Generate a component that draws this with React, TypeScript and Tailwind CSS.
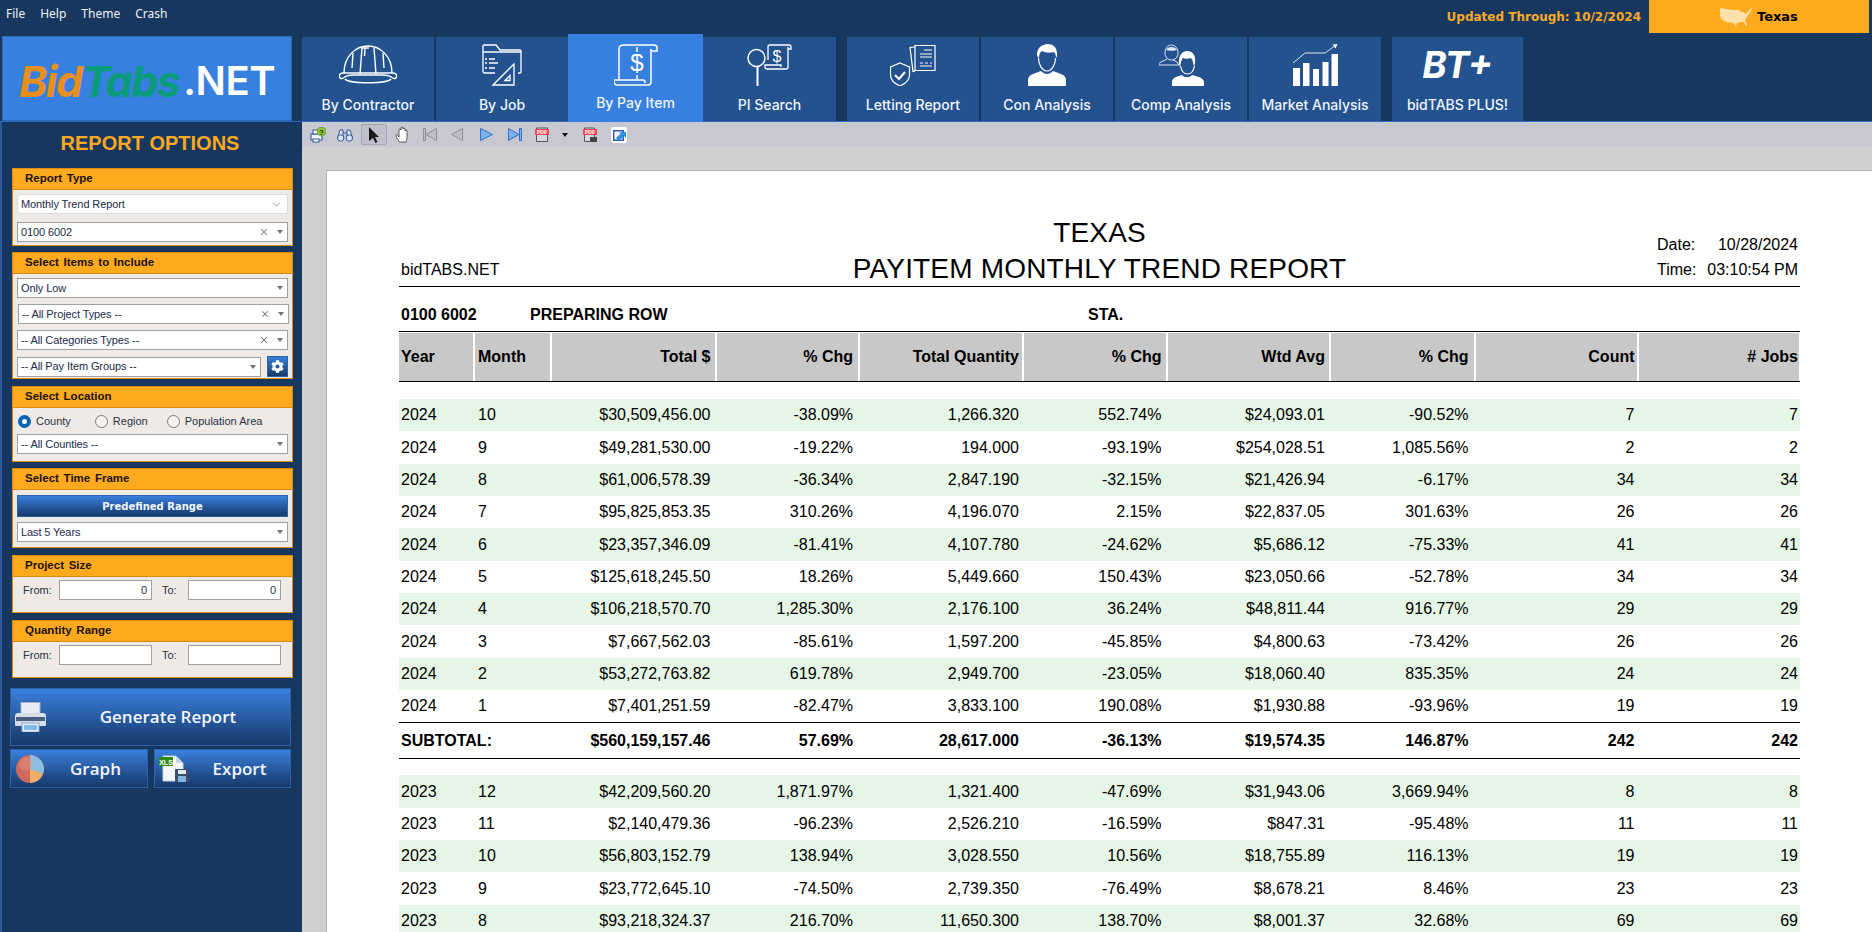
import type { ReactNode } from 'react'
import { ChevronDown, X } from 'lucide-react'
import { FaCog } from 'react-icons/fa'

type Row = string[]

const group2024: Row[] = [
  ['2024', '10', '$30,509,456.00', '-38.09%', '1,266.320', '552.74%', '$24,093.01', '-90.52%', '7', '7'],
  ['2024', '9', '$49,281,530.00', '-19.22%', '194.000', '-93.19%', '$254,028.51', '1,085.56%', '2', '2'],
  ['2024', '8', '$61,006,578.39', '-36.34%', '2,847.190', '-32.15%', '$21,426.94', '-6.17%', '34', '34'],
  ['2024', '7', '$95,825,853.35', '310.26%', '4,196.070', '2.15%', '$22,837.05', '301.63%', '26', '26'],
  ['2024', '6', '$23,357,346.09', '-81.41%', '4,107.780', '-24.62%', '$5,686.12', '-75.33%', '41', '41'],
  ['2024', '5', '$125,618,245.50', '18.26%', '5,449.660', '150.43%', '$23,050.66', '-52.78%', '34', '34'],
  ['2024', '4', '$106,218,570.70', '1,285.30%', '2,176.100', '36.24%', '$48,811.44', '916.77%', '29', '29'],
  ['2024', '3', '$7,667,562.03', '-85.61%', '1,597.200', '-45.85%', '$4,800.63', '-73.42%', '26', '26'],
  ['2024', '2', '$53,272,763.82', '619.78%', '2,949.700', '-23.05%', '$18,060.40', '835.35%', '24', '24'],
  ['2024', '1', '$7,401,251.59', '-82.47%', '3,833.100', '190.08%', '$1,930.88', '-93.96%', '19', '19'],
]

const group2023: Row[] = [
  ['2023', '12', '$42,209,560.20', '1,871.97%', '1,321.400', '-47.69%', '$31,943.06', '3,669.94%', '8', '8'],
  ['2023', '11', '$2,140,479.36', '-96.23%', '2,526.210', '-16.59%', '$847.31', '-95.48%', '11', '11'],
  ['2023', '10', '$56,803,152.79', '138.94%', '3,028.550', '10.56%', '$18,755.89', '116.13%', '19', '19'],
  ['2023', '9', '$23,772,645.10', '-74.50%', '2,739.350', '-76.49%', '$8,678.21', '8.46%', '23', '23'],
  ['2023', '8', '$93,218,324.37', '216.70%', '11,650.300', '138.70%', '$8,001.37', '32.68%', '69', '69'],
]

const headers = ['Year', 'Month', 'Total $', '% Chg', 'Total Quantity', '% Chg', 'Wtd Avg', '% Chg', 'Count', '# Jobs']

const cellPad = [
  'pl-[2px] text-left',
  'pl-[3px] text-left',
  'pr-[6.5px] text-right',
  'pr-[7px] text-right',
  'pr-[5px] text-right',
  'pr-[6.5px] text-right',
  'pr-[6px] text-right',
  'pr-[7.5px] text-right',
  'pr-[4.5px] text-right',
  'pr-[3px] text-right',
]

const gridCols = 'grid grid-cols-[76px_77px_165px_143px_164px_144px_163px_145px_163px_162px]'

function HelmetIcon() {
  return (
    <svg width="58" height="41" viewBox="0 0 58 41" fill="none" stroke="white" strokeWidth="1.4">
      <path d="M5 29C5 12 17 2 29 2s24 10 24 27" />
      <path d="M4 29c-3 0-4 2-3.500 4 .6 2 2.500 2 4.500 .5C8 31 12 31 15 31h28c3 0 7 0 10 2.500 2 1.500 3.900 1.500 4.500-.5.5-2-.5-4-3.500-4z" />
      <path d="M6 35c4 5 42 5 46 0" />
      <path d="M21 30l2-26M37 30l-2-26M26 4l-.5 8M23 4h7" />
      <path d="M14 9l-1 15M44 9l1 15" />
    </svg>
  )
}

function FolderIcon() {
  return (
    <svg width="40" height="42" viewBox="0 0 40 42" fill="none" stroke="white" strokeWidth="1.3">
      <path d="M13 29H3q-2 0-2-2V2q0-1 1-1h12l4 5h20q1 0 1 1v21q0 1-1 1h-2" />
      <path d="M1 8h38" />
      <path d="M3 15h2M7 15h6M3 19h2M7 19h9M3 24h2M7 24h6" />
      <path d="M11 41l21-21v21z" />
      <path d="M23 36.500l5-5v5z" />
    </svg>
  )
}

function ScrollIcon() {
  return (
    <svg width="44" height="42" viewBox="0 0 44 42" fill="none" stroke="white" strokeWidth="1.5">
      <path d="M5 35V5q0-4 5-4h30q3 0 3 3v3h-6" />
      <path d="M37 5v33q0 3-3 3H3q-3 0-3-3v-2h29q2 0 2 2v1" />
      <path d="M23 3v5M23 31v4" />
      <text x="23" y="27" textAnchor="middle" fontSize="24" fill="white" stroke="none" fontFamily="Liberation Sans, sans-serif">$</text>
    </svg>
  )
}

function SearchScrollIcon() {
  return (
    <svg width="45" height="42" viewBox="0 0 45 42" fill="none" stroke="white" strokeWidth="1.3">
      <circle cx="9.500" cy="14" r="8.500" strokeWidth="1.5" />
      <path d="M10.500 23v19" strokeWidth="2" />
      <path d="M21 16V3q0-2 2-2h19q2 0 2 2v2h-3" />
      <path d="M41 3v20q0 2-2 2H20q-2 0-2-2v-2h16v2" />
      <text x="30" y="18" textAnchor="middle" fontSize="16" fill="white" stroke="none" fontFamily="Liberation Sans, sans-serif">$</text>
    </svg>
  )
}

function LettingIcon() {
  return (
    <svg width="46" height="42" viewBox="0 0 46 42" fill="none" stroke="white" strokeWidth="1.200">
      <path d="M25 3l-5 .5 3 24 2-.3" />
      <path d="M25 1.500h20v25H25z" />
      <path d="M34 6h8M30 10h12M30 13h12M30 19h3M35 19h3M40 19h2M30 22h12" strokeWidth="1" />
      <path d="M10 19l9.500 4v8c0 5-5 9-9.500 11C5.500 40 .5 36 .5 31v-8z" />
      <path d="M5 31l4 4 6-7" strokeWidth="2" />
    </svg>
  )
}

function PersonIcon() {
  return (
    <svg width="38" height="42" viewBox="0 0 38 42" fill="white">
      <path d="M9 11C9 4 13 1 19 0c6 0 10 3 10 10 0 2 0 3-1 4 0-3-1-5-2-6-3 1-9 1-12-1-2 1-3 4-3 7-1-1-2-2-2-3z" />
      <path d="M10.500 14c0 7 4 13 8.500 13s8.500-6 8.500-13" fill="none" stroke="white" strokeWidth="1.200" />
      <path d="M0 42v-6c0-3 2-5 5-6l8-3c2 2 4 3 6 3s4-1 6-3l8 3c3 1 5 3 5 6v6z" />
    </svg>
  )
}

function CompIcon() {
  return (
    <svg width="45" height="42" viewBox="0 0 45 42" fill="none">
      <path d="M6 9c0-5 3-8 6.500-8S19 4 19 9c0 4-3 7-6.500 7S6 13 6 9z" stroke="#dbe6f3" strokeWidth="1" />
      <path d="M7 6c2-4 9-4 11 0-3 1-8 1-11 0z" fill="#dbe6f3" />
      <path d="M8 15l-7 3.500c-1 .5-1 1-1 2V21h20l-2-3-4-2" stroke="#dbe6f3" strokeWidth="1" />
      <path d="M20 20c-1-6 2-13 8-13 7 0 9 6 8 12 0 1-1 3-1 4-1-4-1-7-3-9-3 1-6 1-8 0-2 2-2 5-3 9l-1-3z" fill="white" />
      <path d="M21.500 22c1 5 4 8 7 8s6-3 7-8" stroke="white" strokeWidth="1.200" />
      <path d="M13 42v-4c0-2 1-4 4-5l6-2c2 2 3 2 5 2s3 0 5-2l7 2c3 1 5 3 5 5v4z" fill="white" />
    </svg>
  )
}

function MarketIcon() {
  return (
    <svg width="45" height="42" viewBox="0 0 45 42" fill="white">
      <rect x="0" y="24" width="7" height="18" />
      <rect x="10" y="19" width="6.500" height="23" />
      <rect x="20" y="25" width="6" height="17" />
      <rect x="29.500" y="18" width="6" height="24" />
      <rect x="38.500" y="10" width="6.500" height="32" />
      <path d="M0 19L12 9h20L43 1" fill="none" stroke="#dbe6f3" strokeWidth="1" />
      <path d="M44.500 0l-5 .500 3 4z" />
    </svg>
  )
}

const tabs: { label: string; icon: ReactNode; className: string; active?: boolean }[] = [
  { label: 'By Contractor', icon: <HelmetIcon />, className: 'w-[132px]' },
  { label: 'By Job', icon: <FolderIcon />, className: 'ml-[2px] w-[132px]' },
  { label: 'By Pay Item', icon: <ScrollIcon />, className: 'w-[135px]', active: true },
  { label: 'PI Search', icon: <SearchScrollIcon />, className: 'w-[133px]' },
  { label: 'Letting Report', icon: <LettingIcon />, className: 'ml-[11px] w-[132px]' },
  { label: 'Con Analysis', icon: <PersonIcon />, className: 'ml-[2px] w-[132px]' },
  { label: 'Comp Analysis', icon: <CompIcon />, className: 'ml-[2px] w-[132px]' },
  { label: 'Market Analysis', icon: <MarketIcon />, className: 'ml-[2px] w-[132px]' },
  {
    label: 'bidTABS PLUS!',
    className: 'ml-[11px] w-[131px]',
    icon: <span className="font-['Inter',sans-serif] text-[37px] font-bold italic leading-[42px] text-white">BT+</span>,
  },
]

function NavTab({ label, icon, className, active }: { label: string; icon: ReactNode; className: string; active?: boolean }) {
  return (
    <div
      className={`flex flex-col items-center ${className} ${
        active ? 'relative z-10 -mt-[3px] h-[88px] bg-[#3880e0] pt-[9px]' : 'h-[84px] bg-[#23528f] pt-[6px]'
      }`}
    >
      <div className="flex h-[43px] items-center">{icon}</div>
      <div className={`font-['Inter',sans-serif] text-[14px] font-medium leading-[18px] text-[#f0f4fa] ${active ? 'mt-[8px]' : 'mt-[10px]'}`}>{label}</div>
    </div>
  )
}

function Caret() {
  return <span className="h-0 w-0 border-x-[3.500px] border-t-[4px] border-x-transparent border-t-[#707070]" />
}

function Select({ value, clear, soft, className }: { value: string; clear?: boolean; soft?: boolean; className?: string }) {
  return (
    <div
      className={`flex h-[20px] items-center border bg-white pl-[3px] pr-[4px] tracking-[-0.100px] text-[#1d2a4a] ${
        soft ? 'rounded-[2px] border-[#dcdcdc]' : 'border-[#a0a0a0]'
      } ${className ?? ''}`}
    >
      <span className="flex-1 truncate">{value}</span>
      {clear && <X className="mr-[8px] text-[#68707c]" size={10} strokeWidth={2.500} />}
      {soft ? <ChevronDown className="text-[#505050]" size={13} strokeWidth={1} /> : <Caret />}
    </div>
  )
}

function Panel({ title, children, className }: { title: string; children: ReactNode; className?: string }) {
  return (
    <section className={`w-[281px] border border-[#dc8b10] bg-[#efeae5] ${className ?? ''}`}>
      <h2 className="flex h-[21px] items-center border-b border-[#dc8b10] bg-[#fdaa1e] pl-[12px] text-[11.500px] font-bold text-[#1a1208] [word-spacing:1.500px]">
        {title}
      </h2>
      {children}
    </section>
  )
}

function Radio({ label, checked }: { label: string; checked?: boolean }) {
  return (
    <label className="flex items-center gap-[5px]">
      <span
        className={`h-[13px] w-[13px] rounded-full ${
          checked ? 'border-[4px] border-[#0563b5] bg-white' : 'border border-[#7a7a7a] bg-[#f6f3ef]'
        }`}
      />
      <span className="text-[#2a3245]">{label}</span>
    </label>
  )
}

function RangeRow({ from, to }: { from?: string; to?: string }) {
  return (
    <div className="flex h-[35px] items-start pl-[10px] pt-[3px] text-[#2a3245]">
      <span className="flex h-[20px] w-[36px] items-center">From:</span>
      <div className="flex h-[20px] w-[93px] items-center justify-end border border-[#a0a0a0] bg-white pr-[4px]">{from}</div>
      <span className="ml-[10px] flex h-[20px] w-[26px] items-center">To:</span>
      <div className="flex h-[20px] w-[93px] items-center justify-end border border-[#a0a0a0] bg-white pr-[4px]">{to}</div>
    </div>
  )
}

function ActionButton({ label, icon, className }: { label: string; icon: ReactNode; className: string }) {
  return (
    <button className={`flex items-center border border-[#2c62a8] bg-gradient-to-b from-[#3a80de] to-[#17396b] font-['Open_Sans',sans-serif] text-[17px] font-semibold text-[#f2f6fc] ${className}`}>
      {icon}
      <span className="flex-1 text-center">{label}</span>
    </button>
  )
}

function PrinterIcon() {
  return (
    <svg className="ml-[4px]" width="31" height="30" viewBox="0 0 31 30">
      <rect x="6" y="0.500" width="19" height="12" fill="#e8ecf4" stroke="#a8b4c8" />
      <path d="M3 11h25q3 0 3 3v9q0 1-1 1H1q-1 0-1-1v-9q0-3 3-3z" fill="#d6deea" />
      <rect x="1" y="15" width="29" height="4" fill="#4a5e80" />
      <rect x="7" y="21" width="17" height="9" fill="#e8f2fb" stroke="#8fa5c0" />
      <rect x="9" y="23" width="13" height="5" fill="#7fbde8" />
    </svg>
  )
}

function PieIcon() {
  return (
    <svg className="ml-[5px]" width="28" height="28" viewBox="0 0 28 28">
      <circle cx="14" cy="14" r="14" fill="#cf6a5c" />
      <path d="M14 14L14 0A14 14 0 0 1 27 19z" fill="#89c0e4" />
      <path d="M14 14L27 19A14 14 0 0 1 14 28z" fill="#efae6a" />
      <circle cx="10" cy="9" r="7" fill="#e89a8c" opacity="0.400" />
    </svg>
  )
}

function XlsIcon() {
  return (
    <svg className="ml-[4px]" width="30" height="27" viewBox="0 0 30 27">
      <path d="M4 1h13l7 7v18H4z" fill="#f4f7fb" stroke="#c8d0dc" />
      <path d="M17 1v7h7z" fill="#c8d4e2" />
      <rect x="0" y="2" width="14" height="9" fill="#2f8a12" />
      <text x="7" y="9.500" textAnchor="middle" fontSize="7" fontWeight="700" fill="white" fontFamily="Liberation Sans, sans-serif">XLS</text>
      <rect x="16" y="14" width="14" height="13" rx="1" fill="#3d4f6c" />
      <rect x="19" y="15" width="8" height="4" fill="#dfe6ee" />
      <rect x="19" y="21" width="8" height="6" fill="#7fb6e0" />
    </svg>
  )
}

function UsMap() {
  return (
    <svg width="33" height="20" viewBox="0 0 33 20" fill="#fde1ab">
      <path d="M1 1L14 3L20 3L22 5L25 5L26 7L29 5L32 1L33 2L31 6L29 8L28 10L27 12L26 13L28 18L27 19L25 15L21 15L18 16L17 19L14 16L11 15L9 16L6 14L3 13L1 9Z" />
    </svg>
  )
}

function Toolbar() {
  return (
    <div className="flex h-[25px] items-center bg-[#c8c8d2] pl-[8px]">
      <svg className="mr-[11px]" width="16" height="16" viewBox="0 0 16 16">
        <rect x="1" y="7" width="11" height="6" fill="#f2f5fa" stroke="#2f5496" />
        <rect x="3" y="3" width="6" height="4" fill="white" stroke="#2f5496" />
        <rect x="3" y="12" width="6" height="3" fill="white" stroke="#2f5496" />
        <circle cx="11.500" cy="4.500" r="4.500" fill="#8cc63f" stroke="#4d7d14" strokeWidth="0.600" />
        <text x="11.500" y="7.500" textAnchor="middle" fontSize="8" fontWeight="700" fill="#1d3d0a" fontFamily="Liberation Sans, sans-serif">?</text>
      </svg>
      <svg className="mr-[8px]" width="16" height="14" viewBox="0 0 16 14" fill="#dce7f6" stroke="#2f5496">
        <path d="M.5 10L3 2h3v8M15.500 10L13 2h-3v8" />
        <path d="M6 5h4" />
        <circle cx="3.700" cy="10" r="3.200" />
        <circle cx="12.300" cy="10" r="3.200" />
      </svg>
      <div className="mr-[7px] flex h-[21px] w-[26px] items-center justify-center rounded-[2px] border border-[#a8a8b4] bg-[#c0c0cc]">
        <svg width="12" height="16" viewBox="0 0 12 16" fill="#1a1a1a">
          <path d="M1 0l10 10H7l2.500 5-2 1L5 11l-4 3z" />
        </svg>
      </div>
      <svg className="mr-[13px]" width="16" height="17" viewBox="0 0 13 17" fill="white" stroke="#222" strokeWidth="0.700">
        <path d="M4 16C2 13 0 10 .5 9s2 0 3 2V4q0-1 1-1t1 1V2q0-1 1-1t1 1v1q0-1 1-1t1 1v2q0-1 1-1t1 1v7c0 2-1 3-1 4z" />
      </svg>
      <svg className="mr-[14px]" width="14" height="13" viewBox="0 0 14 13" fill="#c0c0c4" stroke="#8e8e92">
        <path d="M.500 .500h2v12h-2zM13.500 .500v12L3 6.500z" />
      </svg>
      <svg className="mr-[17px]" width="12" height="13" viewBox="0 0 12 13" fill="#c0c0c4" stroke="#8e8e92">
        <path d="M11.500 .500v12L.500 6.500z" />
      </svg>
      <svg className="mr-[15px]" width="13" height="13" viewBox="0 0 13 13" fill="#7fb2ec" stroke="#2f6fc4">
        <path d="M.500 .500v12l12-6z" />
      </svg>
      <svg className="mr-[13px]" width="14" height="13" viewBox="0 0 14 13" fill="#7fb2ec" stroke="#2f6fc4">
        <path d="M.500 .500v12L11 6.500zM11.500 .500h2v12h-2z" />
      </svg>
      <svg className="mr-[13px]" width="14" height="15" viewBox="0 0 14 15">
        <path d="M1.500 1h11v13.500h-11z" fill="#d8d8e0" stroke="#555" />
        <rect x="0" y="2" width="14" height="6" fill="#e8485a" />
        <text x="7" y="7" textAnchor="middle" fontSize="5.500" fontWeight="700" fill="white" fontFamily="Liberation Serif, serif">PDF</text>
      </svg>
      <span className="mr-[15px] h-0 w-0 border-x-[3.500px] border-t-[4px] border-x-transparent border-t-[#111]" />
      <svg className="mr-[14px]" width="14" height="15" viewBox="0 0 14 15">
        <path d="M1.500 1h10v13.500h-10z" fill="#d8d8e0" stroke="#555" />
        <rect x="0" y="2" width="14" height="6" fill="#e8485a" />
        <text x="7" y="7" textAnchor="middle" fontSize="5.500" fontWeight="700" fill="white" fontFamily="Liberation Serif, serif">PDF</text>
        <rect x="7" y="10" width="7" height="5" fill="#444" />
      </svg>
      <svg width="16" height="16" viewBox="0 0 16 16">
        <rect width="16" height="16" rx="2" fill="white" />
        <rect x="2" y="3" width="11" height="11" fill="#3558a8" />
        <rect x="3.500" y="4.500" width="8" height="8" fill="white" />
        <path d="M5 11l5-5-2-1h7v6l-2-2-5 5z" fill="#2a8fe0" />
      </svg>
    </div>
  )
}

function DataRow({ row, index }: { row: Row; index: number }) {
  return (
    <div className={`${gridCols} h-[32.350px] items-center ${index % 2 === 0 ? 'bg-[#e6f6e6]' : ''}`}>
      {row.map((v, i) => (
        <div key={i} className={cellPad[i]}>
          {v}
        </div>
      ))}
    </div>
  )
}

export default function App() {
  return (
    <div className="flex h-[932px] w-[1872px] flex-col overflow-hidden bg-[#17375e] font-['Liberation_Sans',sans-serif] text-[11px]">
      {/* top menu */}
      <header className="flex h-[36px] items-start justify-between">
        <nav className="flex h-[28px] items-center gap-[15px] pl-[6px] font-['Noto_Sans',sans-serif] text-[12px] text-[#eef2f8]">
          <span>File</span>
          <span>Help</span>
          <span>Theme</span>
          <span>Crash</span>
        </nav>
        <div className="flex items-center">
          <span className="mr-[8px] font-['DejaVu_Sans',sans-serif] text-[12px] font-bold text-[#f9a929]">Updated Through: 10/2/2024</span>
          <div className="mr-[3px] flex h-[33px] w-[220px] items-center bg-[#fdaa1e] pl-[70px]">
            <UsMap />
            <span className="ml-[5px] font-['DejaVu_Sans',sans-serif] text-[13px] font-bold text-black">Texas</span>
          </div>
        </div>
      </header>

      {/* logo and report tabs */}
      <div className="flex h-[86px] border-b border-[#2f6bc0]">
        <div className="ml-[2px] flex h-[85px] w-[290px] items-center justify-center gap-[4px] border border-[#2a68b4] bg-[#3880e0] pt-[5px] font-['Inter',sans-serif] leading-none">
          <span className="text-[43px] font-bold italic tracking-[-1.500px]">
            <span className="text-[#e78f1f]">Bid</span>
            <span className="text-[#0a9b7a]">Tabs</span>
          </span>
          <span className="text-[40px] font-semibold tracking-[-0.500px] text-white">.NET</span>
        </div>
        <div className="ml-[10px] flex pt-[1px]">
          {tabs.map((t) => (
            <NavTab key={t.label} {...t} />
          ))}
        </div>
      </div>

      <div className="flex min-h-0 flex-1">
        {/* report options */}
        <aside className="w-[302px] shrink-0 border-l-2 border-[#2a5a9c]">
          <h1 className="flex h-[46px] items-center justify-center pb-[5px] pr-[4px] text-[20px] font-bold text-[#fca91f]">
            REPORT OPTIONS
          </h1>
          <div className="flex flex-col gap-[6px] pl-[10px]">
            <Panel title="Report Type">
              <div className="flex flex-col gap-[8px] px-[4px] pb-[3px] pt-[4px]">
                <Select value="Monthly Trend Report" soft />
                <Select value="0100 6002" clear />
              </div>
            </Panel>
            <Panel title="Select Items to Include">
              <div className="flex flex-col gap-[6px] px-[4px] pb-[1px] pt-[4px]">
                <Select value="Only Low" />
                <Select value="-- All Project Types --" clear className="ml-[1px] -mr-[1px]" />
                <Select value="-- All Categories Types --" clear />
                <div className="flex items-center gap-[6px]">
                  <Select value="-- All Pay Item Groups --" className="flex-1" />
                  <span className="flex h-[21px] w-[21px] items-center justify-center border border-[#2c62a8] bg-gradient-to-b from-[#3a80de] to-[#17396b]">
                    <FaCog className="text-white" size={13} />
                  </span>
                </div>
              </div>
            </Panel>
            <Panel title="Select Location" className="mt-[1px]">
              <div className="flex h-[26px] items-center pl-[5px] pt-[1px]">
                <Radio label="County" checked />
                <span className="w-[24px]" />
                <Radio label="Region" />
                <span className="w-[19px]" />
                <Radio label="Population Area" />
              </div>
              <Select value="-- All Counties --" className="mx-[4px] mb-[7px]" />
            </Panel>
            <Panel title="Select Time Frame">
              <div className="px-[4px] pb-[5px] pt-[5px]">
                <div className="flex h-[22px] items-center justify-center border border-[#2c62a8] bg-gradient-to-b from-[#3a80de] to-[#17396b] font-['DejaVu_Sans',sans-serif] text-[10px] font-bold text-[#f2f6fc]">
                  Predefined Range
                </div>
                <Select value="Last 5 Years" className="mt-[5px]" />
              </div>
            </Panel>
            <Panel title="Project Size" className="mt-[1px]">
              <RangeRow from="0" to="0" />
            </Panel>
            <Panel title="Quantity Range" className="mt-[1px]">
              <RangeRow />
            </Panel>
            <div className="-ml-[2px] mt-[4px] flex w-[281px] flex-col gap-[3px]">
              <ActionButton label="Generate Report" icon={<PrinterIcon />} className="h-[58px] w-full" />
              <div className="flex gap-[6px]">
                <ActionButton label="Graph" icon={<PieIcon />} className="h-[39px] w-[138px]" />
                <ActionButton label="Export" icon={<XlsIcon />} className="h-[39px] w-[137px]" />
              </div>
            </div>
          </div>
        </aside>

        {/* report viewer */}
        <main className="flex min-w-0 flex-1 flex-col bg-[#d0d0d0]">
          <Toolbar />
          <div className="min-h-0 flex-1 pl-[24px] pt-[23px]">
            <div className="h-[800px] border-l border-t border-[#b0b0b0] bg-white px-[72px] pt-[44px] font-['Liberation_Sans',sans-serif] text-[16px] leading-[18px] text-black">
              <div className="grid h-[72px] grid-cols-[1fr_auto_1fr] items-end border-b-[1.500px] border-black">
                <div className="pb-[8px] pl-[2px]">bidTABS.NET</div>
                <div className="text-center text-[28px] leading-[36px] tracking-[0.180px]">
                  <div>TEXAS</div>
                  <div>PAYITEM MONTHLY TREND REPORT</div>
                </div>
                <div className="justify-self-end pb-[5px] pr-[2px] leading-[25px]">
                  <div className="flex w-[141px] justify-between">
                    <span>Date:</span>
                    <span>10/28/2024</span>
                  </div>
                  <div className="flex w-[141px] justify-between">
                    <span>Time:</span>
                    <span>03:10:54 PM</span>
                  </div>
                </div>
              </div>
              <div className="flex h-[45px] items-center border-b-[1.500px] border-black pl-[2px] pt-[11px] font-bold">
                <span className="w-[129px]">0100 6002</span>
                <span className="w-[558px]">PREPARING ROW</span>
                <span>STA.</span>
              </div>
              <div className={`${gridCols} mt-[1px] h-[49px] border-b-[1.500px] border-black font-bold`}>
                {headers.map((h, i) => (
                  <div key={i} className={`flex items-center bg-[#c8c8c8] shadow-[inset_-2px_0_0_#fff] ${i > 1 ? 'justify-end' : ''} ${cellPad[i]}`}>
                    {h}
                  </div>
                ))}
              </div>
              <div className="mt-[17px]">
                {group2024.map((r, i) => (
                  <DataRow key={r[1]} row={r} index={i} />
                ))}
              </div>
              <div className={`${gridCols} h-[37px] items-center border-y-[1.500px] border-black font-bold`}>
                <div className="col-span-2 pl-[2px]">SUBTOTAL:</div>
                <div className={cellPad[2]}>$560,159,157.46</div>
                <div className={cellPad[3]}>57.69%</div>
                <div className={cellPad[4]}>28,617.000</div>
                <div className={cellPad[5]}>-36.13%</div>
                <div className={cellPad[6]}>$19,574.35</div>
                <div className={cellPad[7]}>146.87%</div>
                <div className={cellPad[8]}>242</div>
                <div className={cellPad[9]}>242</div>
              </div>
              <div className="mt-[16px]">
                {group2023.map((r, i) => (
                  <DataRow key={r[1]} row={r} index={i} />
                ))}
              </div>
            </div>
          </div>
        </main>
      </div>
    </div>
  )
}
